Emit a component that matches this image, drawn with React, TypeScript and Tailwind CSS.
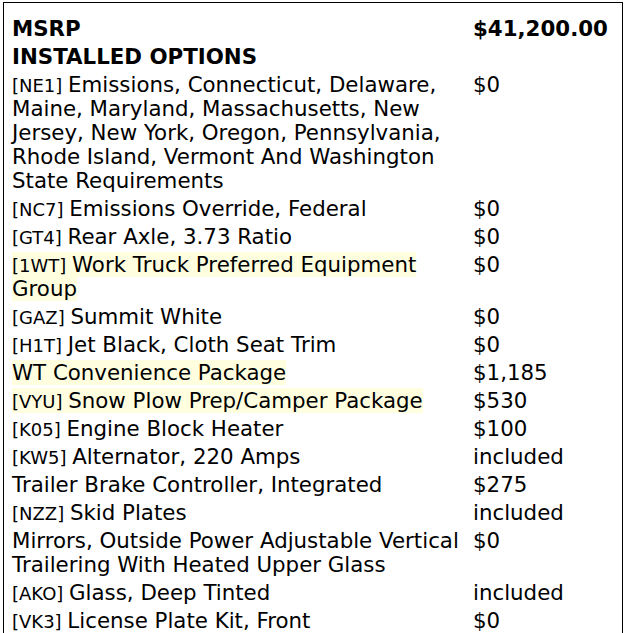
import React from 'react'

type Row = { code?: string; name: string; price: string; hl?: boolean }

const rows: Row[] = [
  { code: 'NE1', name: 'Emissions, Connecticut, Delaware, Maine, Maryland, Massachusetts, New Jersey, New York, Oregon, Pennsylvania, Rhode Island, Vermont And Washington State Requirements', price: '$0' },
  { code: 'NC7', name: 'Emissions Override, Federal', price: '$0' },
  { code: 'GT4', name: 'Rear Axle, 3.73 Ratio', price: '$0' },
  { code: '1WT', name: 'Work Truck Preferred Equipment Group', price: '$0', hl: true },
  { code: 'GAZ', name: 'Summit White', price: '$0' },
  { code: 'H1T', name: 'Jet Black, Cloth Seat Trim', price: '$0' },
  { name: 'WT Convenience Package', price: '$1,185', hl: true },
  { code: 'VYU', name: 'Snow Plow Prep/Camper Package', price: '$530', hl: true },
  { code: 'K05', name: 'Engine Block Heater', price: '$100' },
  { code: 'KW5', name: 'Alternator, 220 Amps', price: 'included' },
  { name: 'Trailer Brake Controller, Integrated', price: '$275' },
  { code: 'NZZ', name: 'Skid Plates', price: 'included' },
  { name: 'Mirrors, Outside Power Adjustable Vertical Trailering With Heated Upper Glass', price: '$0' },
  { code: 'AKO', name: 'Glass, Deep Tinted', price: 'included' },
  { code: 'VK3', name: 'License Plate Kit, Front', price: '$0' },
]

export default function App() {
  return (
    <div className="bg-white text-black min-h-screen pt-[2px] pl-[3px] font-['DejaVu_Sans',sans-serif] text-[21.33px] leading-[24px]">
      <div className="w-[620px] border border-black pt-[14px] pl-[8px] pb-4">
        <div className="grid grid-cols-[461px_1fr] gap-y-[4px]">
          <div className="font-bold">MSRP</div>
          <div className="font-bold">$41,200.00</div>
          <div className="font-bold col-span-2">INSTALLED OPTIONS</div>
          {rows.map((r, i) => (
            <React.Fragment key={i}>
              <div className="pr-1">
                <span className={r.hl ? 'bg-[#ffffe0]' : ''}>
                  {r.code && <span className="text-[18px] leading-[16px]">[{r.code}] </span>}
                  {r.name}
                </span>
              </div>
              <div>{r.price}</div>
            </React.Fragment>
          ))}
        </div>
      </div>
    </div>
  )
}
